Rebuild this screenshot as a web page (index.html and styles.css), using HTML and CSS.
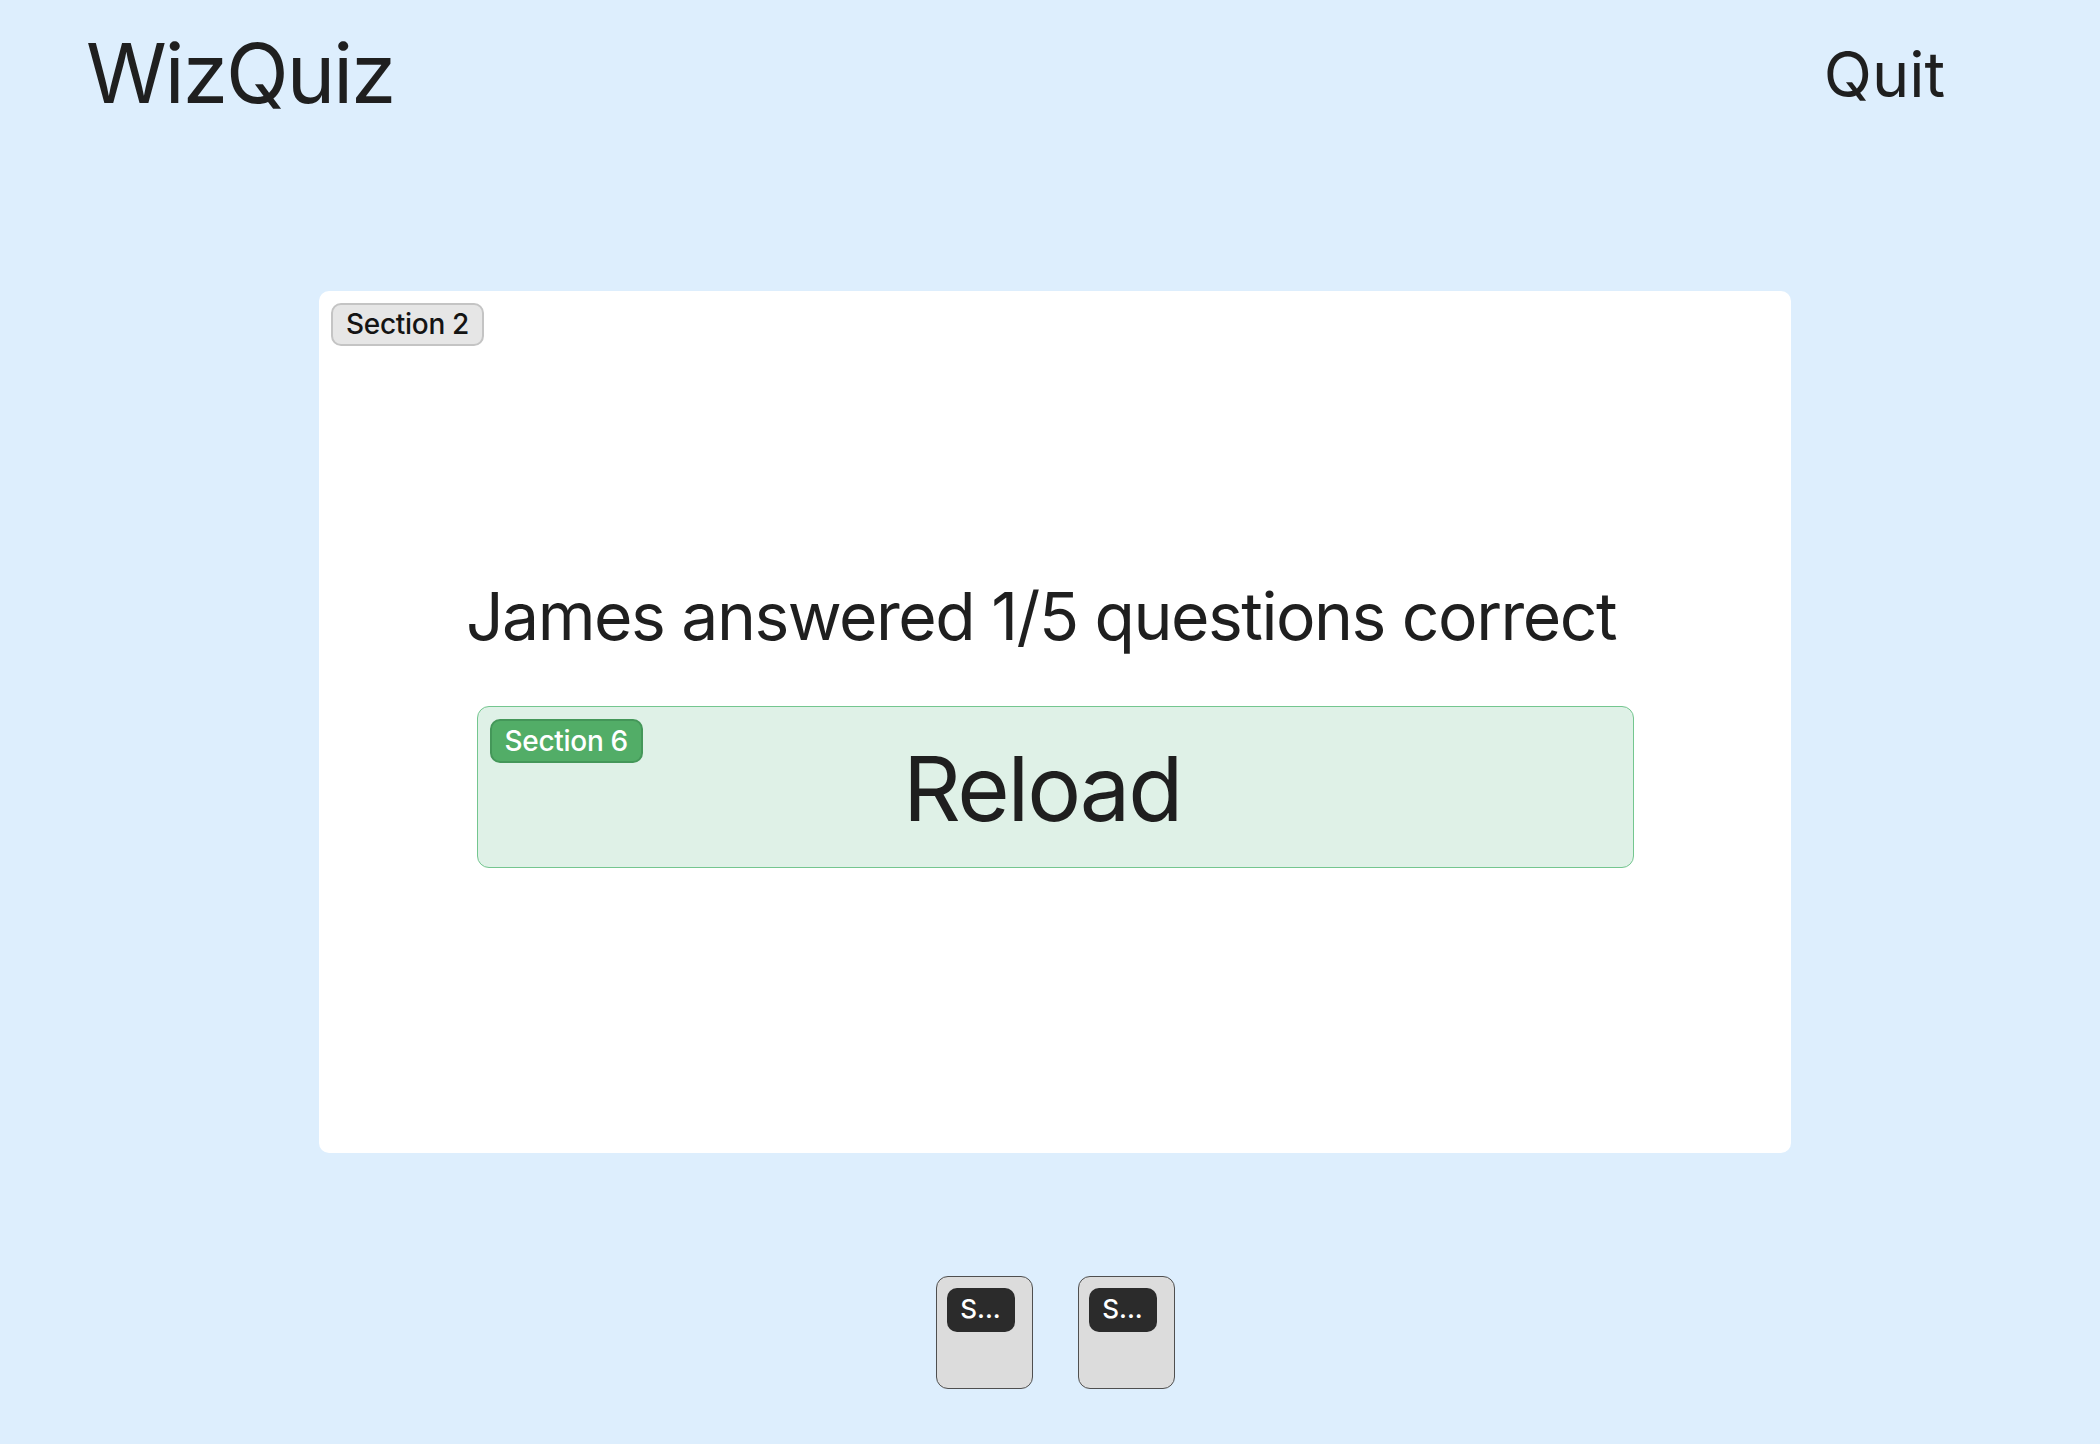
FILE: index.html
```html
<!DOCTYPE html>
<html lang="en">
<head>
<meta charset="utf-8">
<title>WizQuiz</title>
<link rel="stylesheet" href="styles.css">
</head>
<body>
<header class="topbar">
  <div class="logo">WizQuiz</div>
  <button class="quit">Quit</button>
</header>
<main class="stage">
  <section class="card">
    <span class="badge badge-grey">Section 2</span>
    <h1 class="result">James answered 1/5 questions correct</h1>
    <div class="reload">
      <span class="badge badge-green">Section 6</span>
      <span class="reload-label">Reload</span>
    </div>
  </section>
  <nav class="tiles">
    <div class="tile"><span class="tile-tag">S...</span></div>
    <div class="tile"><span class="tile-tag">S...</span></div>
  </nav>
</main>
</body>
</html>
```
FILE: styles.css
```css
* { box-sizing: border-box; }
html, body { margin: 0; padding: 0; }
body {
  background: #ddeefd;
  font-family: Inter, "Noto Sans", sans-serif;
  color: #1f1f1f;
  min-height: 1444px;
}
.topbar {
  display: flex;
  justify-content: space-between;
  align-items: center;
  padding: 24px 155px 0 86px;
  height: 123px;
}
.logo {
  font-size: 82px;
  line-height: 99px;
  font-weight: 400;
  letter-spacing: -2px;
}
.quit {
  background: none;
  border: none;
  padding: 0;
  font-family: inherit;
  color: #1f1f1f;
  font-size: 63px;
  line-height: 76px;
  font-weight: 400;
}
.stage {
  display: flex;
  flex-direction: column;
  align-items: center;
  padding: 168px 0 0 10px;
}
.card {
  position: relative;
  width: 1472px;
  height: 862px;
  background: #ffffff;
  border-radius: 10px;
  display: flex;
  flex-direction: column;
  align-items: center;
  justify-content: center;
}
.badge {
  position: absolute;
  top: 12px;
  left: 12px;
  height: 43px;
  padding: 0 13px;
  border-radius: 10px;
  border: 2px solid;
  font-size: 28px;
  font-weight: 500;
  line-height: 39px;
  letter-spacing: -0.3px;
}
.badge-grey {
  background: #e6e6e6;
  border-color: #c4c4c4;
  color: #141414;
}
.badge-green {
  background: #52ad67;
  border-color: #449759;
  color: #ffffff;
  padding: 0 13px;
  height: 44px;
  line-height: 40px;
}
.result {
  margin: 0 28px 50px 0;
  font-size: 66px;
  font-weight: 400;
  line-height: 79px;
  letter-spacing: -1.5px;
}
.reload {
  position: relative;
  width: 1157px;
  height: 162px;
  background: #dff1e7;
  border: 1.5px solid #74c68f;
  border-radius: 12px;
  display: flex;
  justify-content: center;
  align-items: center;
}
.reload-label {
  font-size: 90px;
  line-height: 110px;
  padding: 4px 26px 0 0;
  letter-spacing: -2.2px;
}
.tiles {
  display: flex;
  gap: 45px;
  margin-top: 123px;
}
.tile {
  width: 97px;
  height: 113px;
  background: #dcdcdc;
  border: 1.5px solid #4f4f4f;
  border-radius: 12px;
  padding: 11px 0 0 10px;
}
.tile-tag {
  display: inline-block;
  width: 68px;
  height: 44px;
  background: #2b2b2b;
  color: #ffffff;
  border-radius: 10px;
  font-size: 26px;
  font-weight: 500;
  line-height: 42px;
  text-align: center;
}
```
